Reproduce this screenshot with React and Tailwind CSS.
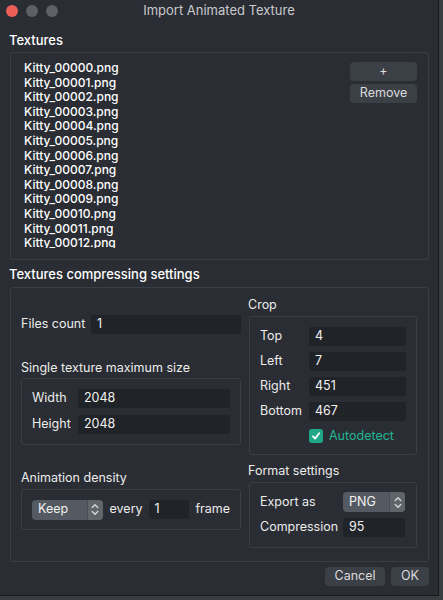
import React from "react";

const files = Array.from({ length: 13 }, (_, i) => `Kitty_${String(i).padStart(5, "0")}.png`);

function Field({ value, className = "" }) {
  return (
    <div className={`h-[19px] bg-[#202328] rounded-[2px] px-[6px] flex items-center text-[#f2f2f2] ${className}`}>
      {value}
    </div>
  );
}

function Stepper({ value, className = "" }) {
  return (
    <div className={`h-[20px] rounded-[4px] bg-[#555961] flex items-stretch overflow-hidden ${className}`}>
      <div className="flex-1 flex items-center pl-[6px] text-[#f2f2f2]">{value}</div>
      <div className="w-[16px] border-l border-[#494d54] bg-[#60646b] flex items-center justify-center">
        <svg width="8" height="13" viewBox="0 0 8 13" fill="none" stroke="#d8d8d8" strokeWidth="1.3" strokeLinecap="round" strokeLinejoin="round">
          <path d="M1.2 4.5 L4 1.7 L6.8 4.5" />
          <path d="M1.2 8.5 L4 11.3 L6.8 8.5" />
        </svg>
      </div>
    </div>
  );
}

function Box({ children, className = "" }) {
  return <div className={`border border-[#3a3e45] rounded-[3px] ${className}`}>{children}</div>;
}

export default function App() {
  return (
    <div
      className="w-[443px] h-[600px] bg-[#3a3c40] text-[12.5px] text-[#ececec]"
      style={{ fontFamily: '"Inter", "Noto Sans", sans-serif' }}
    >
      <div className="w-[439px] h-[596px] bg-[#2a2d33] border-r border-b border-[#18191b] flex flex-col">
        {/* title bar */}
        <div className="h-[22px] grid grid-cols-[1fr_auto_1fr] items-center">
          <div className="flex items-center gap-[8px] pl-[6px]">
            <span className="w-[12px] h-[12px] rounded-full bg-[#ec5f59]" />
            <span className="w-[12px] h-[12px] rounded-full bg-[#5d6066]" />
            <span className="w-[12px] h-[12px] rounded-full bg-[#5d6066]" />
          </div>
          <div className="text-[13px] text-[#c9cacc]">Import Animated Texture</div>
          <div />
        </div>

        <div className="px-[9px] flex flex-col">
          <div className="mt-[10px] h-[16px] leading-[16px] text-[13px] font-medium text-white">Textures</div>
          <Box className="mt-[4px] ml-[1px] h-[208px] flex justify-between overflow-hidden">
            <div className="ml-[13px] mt-[5px] h-[190px] overflow-hidden pt-[3px] leading-[14.6px] text-[12px] font-medium text-white">
              {files.map((f) => (
                <div key={f}>{f}</div>
              ))}
            </div>
            <div className="pr-[11px] pt-[9px] flex flex-col gap-[3px]">
              <button className="w-[67px] h-[19px] rounded-[4px] bg-[#3b3f46] text-[#dcdcdc] leading-none">+</button>
              <button className="w-[67px] h-[19px] rounded-[4px] bg-[#3b3f46] text-[#dcdcdc] leading-none">Remove</button>
            </div>
          </Box>

          <div className="mt-[6px] h-[16px] leading-[16px] text-[13px] font-medium text-white">Textures compressing settings</div>
          <Box className="mt-[5px] ml-[1px] h-[275px] flex gap-[7px] pl-[10px]">
            {/* left column */}
            <div className="w-[220px] flex flex-col pt-[27px]">
              <div className="flex items-center">
                <span className="w-[70px]">Files count</span>
                <Field value="1" className="flex-1" />
              </div>
              <div className="mt-[26px] h-[16px] leading-[16px]">Single texture maximum size</div>
              <Box className="mt-[2px] h-[67px] px-[10px] pt-[10px] flex flex-col gap-[7px]">
                <div className="flex items-center">
                  <span className="w-[46px]">Width</span>
                  <Field value="2048" className="flex-1" />
                </div>
                <div className="flex items-center">
                  <span className="w-[46px]">Height</span>
                  <Field value="2048" className="flex-1" />
                </div>
              </Box>
              <div className="mt-[25px] h-[16px] leading-[16px]">Animation density</div>
              <Box className="mt-[3px] h-[41px] px-[10px] flex items-center">
                <Stepper value="Keep" className="w-[71px]" />
                <span className="ml-[7px]">every</span>
                <Field value="1" className="ml-[6px] w-[41px]" />
                <span className="ml-[6px]">frame</span>
              </Box>
            </div>

            {/* right column */}
            <div className="w-[169px] flex flex-col pt-[9px]">
              <div className="h-[16px] leading-[16px]">Crop</div>
              <Box className="mt-[3px] ml-[1px] h-[139px] pl-[10px] pr-[10px] pt-[10px] flex flex-col gap-[6px]">
                {[
                  ["Top", "4"],
                  ["Left", "7"],
                  ["Right", "451"],
                  ["Bottom", "467"],
                ].map(([l, v]) => (
                  <div key={l} className="flex items-center">
                    <span className="w-[49px]">{l}</span>
                    <Field value={v} className="flex-1" />
                  </div>
                ))}
                <div className="flex items-center pl-[49px]">
                  <span className="w-[14px] h-[14px] rounded-[3px] bg-[#1fa889] flex items-center justify-center">
                    <svg width="10" height="10" viewBox="0 0 10 10" fill="none" stroke="white" strokeWidth="1.8" strokeLinecap="round" strokeLinejoin="round">
                      <path d="M2 5.3 L4.2 7.5 L8.2 2.2" />
                    </svg>
                  </span>
                  <span className="ml-[6px] text-[#22b592]">Autodetect</span>
                </div>
              </Box>
              <div className="mt-[8px] h-[16px] leading-[16px]">Format settings</div>
              <Box className="mt-[3px] ml-[1px] h-[66px] px-[10px] pt-[9px] flex flex-col gap-[6px]">
                <div className="flex items-center">
                  <span className="w-[83px]">Export as</span>
                  <Stepper value="PNG" className="w-[62px]" />
                </div>
                <div className="flex items-center">
                  <span className="w-[83px]">Compression</span>
                  <Field value="95" className="w-[62px]" />
                </div>
              </Box>
            </div>
          </Box>

          <div className="mt-[5px] flex justify-end gap-[6px]">
            <button className="w-[60px] h-[19px] rounded-[4px] bg-[#3b3f46] text-[#dcdcdc] leading-none">Cancel</button>
            <button className="w-[38px] h-[19px] rounded-[4px] bg-[#3b3f46] text-[#dcdcdc] leading-none">OK</button>
          </div>
        </div>
      </div>
    </div>
  );
}
